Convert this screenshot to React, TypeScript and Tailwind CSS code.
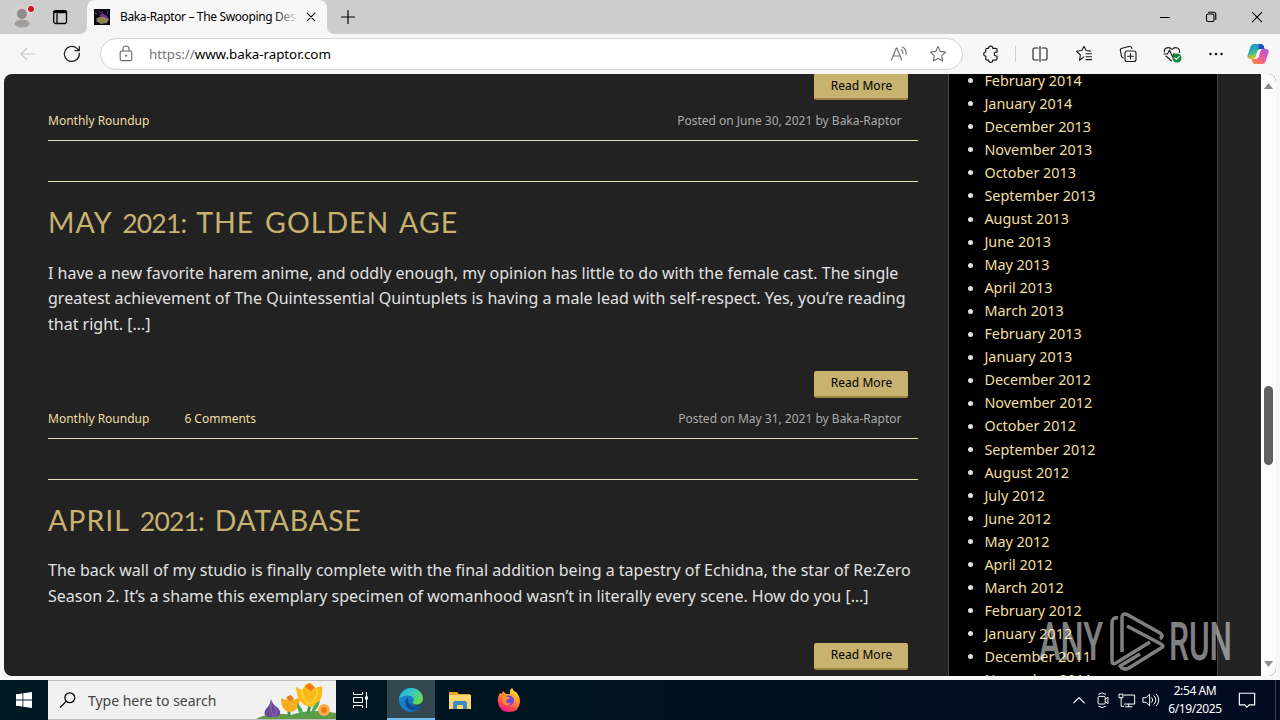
import type { ReactNode } from "react";

const archives = [
  "February 2014",
  "January 2014",
  "December 2013",
  "November 2013",
  "October 2013",
  "September 2013",
  "August 2013",
  "June 2013",
  "May 2013",
  "April 2013",
  "March 2013",
  "February 2013",
  "January 2013",
  "December 2012",
  "November 2012",
  "October 2012",
  "September 2012",
  "August 2012",
  "July 2012",
  "June 2012",
  "May 2012",
  "April 2012",
  "March 2012",
  "February 2012",
  "January 2012",
  "December 2011",
  "November 2011",
];

function Icon({ size = 20, className = "", children }: { size?: number; className?: string; children: ReactNode }) {
  return (
    <svg
      width={size}
      height={size}
      viewBox="0 0 20 20"
      fill="none"
      stroke="currentColor"
      strokeWidth="1.1"
      strokeLinecap="round"
      strokeLinejoin="round"
      className={`shrink-0 ${className}`}
    >
      {children}
    </svg>
  );
}

function TabStrip() {
  return (
    <div className="flex h-[34px] items-center bg-[#cdcdcd] text-black">
      <svg width="28" height="28" viewBox="0 0 28 28" className="ml-2 shrink-0">
        <circle cx="14" cy="14" r="11" fill="#d3cfcd" />
        <circle cx="14" cy="11" r="5" fill="#8f8c8a" />
        <ellipse cx="14" cy="20.500" rx="7.500" ry="4" fill="#a19e9c" />
        <circle cx="23" cy="6" r="4" fill="#e9dcdc" />
        <circle cx="23" cy="6" r="3" fill="#d3132b" />
      </svg>
      <Icon className="ml-[14px]">
        <rect x="3.700" y="3.700" width="12.800" height="12.800" rx="2" strokeWidth="1.300" />
        <path d="M7 7v9.500" strokeWidth="1.300" />
        <path d="M4.200 5h11.800" strokeWidth="2.600" />
      </Icon>
      <div className="relative ml-[17px] flex h-full w-[240px] items-center rounded-t-lg bg-[#f7f7f7]">
        <svg width="256" height="8" viewBox="0 0 256 8" className="absolute -left-2 bottom-0">
          <path d="M0 8q8 0 8-8v8zM256 8q-8 0-8-8v8z" fill="#f7f7f7" />
        </svg>
        <svg width="16" height="16" viewBox="0 0 16 16" className="ml-[7px] shrink-0">
          <path fill="#0b0710" d="M0 0h16v16H0z" />
          <path d="M2 12l3-4 4-1 6 3-2 4-6 1z" fill="#8c8553" />
          <path d="M5 7l3-3 5 3 2 3-5-2z" fill="#6d2fa1" />
          <path d="M4 2l3 2 2-2M13 5l1-3" stroke="#5d25a0" fill="none" />
          <path d="M1 4l2 1M2 10l2-1" stroke="#74845b" fill="none" />
        </svg>
        <div className="relative ml-[10px] w-[178px] overflow-hidden text-[12px] tracking-[-0.360px] whitespace-nowrap">
          Baka-Raptor – The Swooping Des
          <div className="absolute inset-y-0 right-0 w-6 bg-gradient-to-r from-transparent to-[#f7f7f7]" />
        </div>
        <Icon size={14} className="ml-[6px]">
          <path d="M4.500 4.500l11 11M15.500 4.500l-11 11" strokeWidth="1.600" />
        </Icon>
      </div>
      <Icon className="ml-[11px]">
        <path d="M10 3.500v13M3.500 10h13" strokeWidth="1.200" />
      </Icon>
      <div className="ml-auto flex items-center gap-[26px] pr-[13px]">
        <Icon>
          <path d="M5.500 10.500h9" />
        </Icon>
        <Icon>
          <rect x="5.500" y="7" width="7.500" height="7.500" rx="1.500" />
          <path d="M7.500 5.200h5.300q2 0 2 2v5.200" />
        </Icon>
        <Icon>
          <path d="M5.300 5.300l9.500 9.500M14.800 5.300l-9.500 9.500" />
        </Icon>
      </div>
    </div>
  );
}

function Toolbar() {
  return (
    <div className="flex h-10 items-center bg-[#f7f7f7] text-[#1b1b1b]">
      <Icon className="ml-[18px] text-[#c8c8c8]">
        <path d="M17 10H3M8.500 4.500L3 10l5.500 5.500" />
      </Icon>
      <Icon className="ml-6">
        <path d="M17.300 9.200a7.500 7.500 0 1 1-2.200-4.600l2 1.900M17.300 2.400v4.300H13" strokeWidth="1.200" />
      </Icon>
      <div className="ml-[18px] flex h-8 w-[863px] items-center rounded-full border border-[#d3d3d3] bg-white">
        <Icon className="ml-[15px] text-[#666]">
          <rect x="4.200" y="7" width="11.600" height="9.600" rx="1.500" />
          <path d="M7 7V5a3 3 0 0 1 6 0v2" />
          <circle cx="10" cy="11.800" r=".5" fill="currentColor" />
        </Icon>
        <div className="ml-[13px] text-[13.400px] tracking-[-0.060px] text-black">
          <span className="text-[#767676]">https://</span>www.baka-raptor.com
        </div>
        <Icon className="ml-auto text-[#707070]">
          <path d="M2.500 16L7.300 4h.6l4.800 12M4.300 12h6.600M12.200 5.500q1.800 1.500 1.800 4M13.500 3q4.300 2.500 3.500 7.500" />
        </Icon>
        <Icon className="mr-[14px] ml-[19px] text-[#707070]">
          <path d="M10 2.500l2.300 4.900 5.300.7-3.900 3.700 1 5.300-4.700-2.600-4.700 2.600 1-5.300-3.900-3.700 5.300-.7z" />
        </Icon>
      </div>
      <Icon className="ml-[18px]">
        <path
          d="M7.600 4.300a2.100 2.100 0 0 1 4.200 0h3q1.200 0 1.200 1.200v2.700h-.8a1.900 1.900 0 0 0 0 3.800h.8v3q0 1.200-1.200 1.200h-3a2.100 2.100 0 0 1-4.200 0H6q-1.200 0-1.200-1.200v-2.800a2.100 2.100 0 0 1 0-4.200V5.500q0-1.200 1.200-1.200z"
          strokeWidth="1.200"
        />
      </Icon>
      <div className="ml-[14px] h-4 w-px bg-[#d0d0d0]" />
      <Icon className="ml-[14px]">
        <path d="M8 4H4.500q-1.500 0-1.500 1.500v9Q3 16 4.500 16H8M12 4h3.500q1.500 0 1.500 1.500v9q0 1.500-1.500 1.500H12M10 2.500v15" />
      </Icon>
      <Icon className="ml-6">
        <path d="M9.700 13l-4.200 3.300.9-5.300L2.500 7.300l5.300-.8L10 2.200l2.100 4.300 4.200.6M12 9.800h5.500M12 12.700h5.500M12 15.600h5.500" />
      </Icon>
      <Icon className="ml-6">
        <path d="M5.500 14q-1.500-.3-2-1.700L2.400 6.800Q2 4.800 4 4.300L11 2.500q2-.3 2.600 1.300l.3 1" />
        <rect x="7" y="7" width="11" height="10.500" rx="2" />
        <path d="M12.500 9.500v5.500M9.700 12.200h5.600" />
      </Icon>
      <Icon className="ml-6">
        <path d="M2.500 8C1.600 3.800 7 2 10 5.500c3-3.500 8.500-1.500 7.400 3M2 10h3.500L7.500 6l3 7 1.500-3.500M4 12l5.500 5" />
        <circle cx="15" cy="14" r="4.500" fill="#13823b" stroke="none" />
        <path d="M12.900 14l1.500 1.500 2.700-3" stroke="white" />
      </Icon>
      <Icon className="ml-6">
        <g fill="currentColor" stroke="none">
          <circle cx="4.500" cy="10" r="1.300" />
          <circle cx="10" cy="10" r="1.300" />
          <circle cx="15.500" cy="10" r="1.300" />
        </g>
      </Icon>
      <svg width="24" height="24" viewBox="0 0 24 24" className="ml-5 shrink-0">
        <defs>
          <linearGradient id="cpA" x1="0" y1="0" x2=".3" y2="1">
            <stop stopColor="#1593df" />
            <stop offset=".6" stopColor="#37b7a0" />
            <stop offset="1" stopColor="#f5c51c" />
          </linearGradient>
          <linearGradient id="cpB" x1="1" y1="0" x2="0" y2="1">
            <stop stopColor="#a557e8" />
            <stop offset=".5" stopColor="#ee5a94" />
            <stop offset="1" stopColor="#fb923c" />
          </linearGradient>
        </defs>
        <path d="M8 2h7q2 0 2.700 2L18.500 7H14q-2 0-2.600 2l-1.800 6Q9 17 7 17H4q-3 0-2.500-3.500L4.500 4.500Q5.500 2 8 2z" fill="url(#cpA)" />
        <path d="M13 2h2q2 0 2.700 2L18.500 7H14q-1.500 0-2 1z" fill="#1a4fc5" />
        <path d="M16 22H9q-2 0-2.700-2L5.500 17H10q2 0 2.600-2l1.800-6q.6-2 2.600-2h3q3 0 2.500 3.500l-3 9Q18.500 22 16 22z" fill="url(#cpB)" />
      </svg>
    </div>
  );
}

function ReadMore() {
  return (
    <div className="mr-[10px] ml-auto flex h-[27px] w-[94px] shrink-0 items-center justify-center rounded-[2px] border-b-2 border-[#9b8445] bg-[#c7b26f] pl-px text-[12px] tracking-[0.050px] text-black">
      Read More
    </div>
  );
}

function PostMeta({ date, comments }: { date: string; comments?: string }) {
  return (
    <div className="mt-[11px] flex h-[30px] items-start border-b border-[#e5dfb9] text-[12px] leading-5 text-[#f1dfa2]">
      <span>Monthly Roundup</span>
      {comments && <span className="ml-[35px]">{comments}</span>}
      <span className="mr-[16.500px] ml-auto text-[#aaa]">Posted on {date} by Baka-Raptor</span>
    </div>
  );
}

function Post({ title, children, footer }: { title: ReactNode; children: ReactNode; footer?: ReactNode }) {
  return (
    <article className="mt-10 flex flex-col border-t border-[#e5dfb9]">
      <h2 className="mt-[22px] h-[37px] font-['Lato'] text-[28.500px] leading-[37px] tracking-[1px] [word-spacing:2.500px] whitespace-nowrap text-[#c7b26f]">
        {title}
      </h2>
      <div className="mt-[19.600px] text-[16px] leading-[25.600px] whitespace-nowrap text-[#e1e1e1]">{children}</div>
      <div className="mt-[33.400px] flex">
        <ReadMore />
      </div>
      {footer}
    </article>
  );
}

function Year({ children }: { children: ReactNode }) {
  return <span className="text-[26.500px] tracking-[-0.800px]">{children}</span>;
}

function Watermark() {
  return (
    <svg width="200" height="68" viewBox="0 0 200 68" className="absolute top-[534px] left-[1032px] opacity-50">
      <g fill="#fff" fontFamily="Roboto" fontWeight="500" fontSize="53">
        <text x="3" y="52" textLength="64" lengthAdjust="spacingAndGlyphs">ANY</text>
        <text x="133" y="52" textLength="63" lengthAdjust="spacingAndGlyphs">RUN</text>
      </g>
      <g fill="none" stroke="#fff" strokeWidth="3.500" strokeLinejoin="round">
        <path d="M82 10q-6-1-6 5v38q0 4 4 2l34-21" />
        <path d="M86 44V10q0-6 6-3l32 18q4 3 0 6" />
        <path d="M91 18l34 18q4 2 0 4L93 60q-5 3-9-2l20-12" />
      </g>
    </svg>
  );
}

function Page() {
  return (
    <div className="relative mx-1 flex h-[602px] overflow-hidden rounded-lg bg-[#222]">
      <main className="ml-[44px] w-[870px] shrink-0">
        <div className="-mt-px flex">
          <ReadMore />
        </div>
        <PostMeta date="June 30, 2021" />
        <Post
          title={<>MAY <Year>2021:</Year> THE GOLDEN AGE</>}
          footer={<PostMeta date="May 31, 2021" comments="6 Comments" />}
        >
          <p>I have a new favorite harem anime, and oddly enough, my opinion has little to do with the female cast. The single</p>
          <p>greatest achievement of The Quintessential Quintuplets is having a male lead with self-respect. Yes, you’re reading</p>
          <p>that right. […]</p>
        </Post>
        <Post title={<>APRIL <Year>2021:</Year> <span className="tracking-[0.600px]">DATABASE</span></>}>
          <p>The back wall of my studio is finally complete with the final addition being a tapestry of Echidna, the star of Re:Zero</p>
          <p>Season 2. It’s a shame this exemplary specimen of womanhood wasn’t in literally every scene. How do you […]</p>
        </Post>
      </main>
      <aside className="ml-[30px] w-[270px] shrink-0 border-x border-[#444] bg-black">
        <ul className="-mt-[4.700px]">
          {archives.map((month) => (
            <li key={month} className="flex h-[23.040px] items-center pl-[19.400px] text-[14.400px] text-[#f1dfa2]">
              <span className="mr-[11px] size-[5px] rounded-full bg-[#e1e1e1]" />
              {month}
            </li>
          ))}
        </ul>
      </aside>
      <div className="ml-auto flex w-[15px] flex-col items-center bg-[#fcfcfc] pt-[9px] pb-[9px]">
        <svg width="9" height="6" viewBox="0 0 9 6">
          <path d="M0 6l4.500-6L9 6z" fill="#8b8b8b" />
        </svg>
        <div className="mt-[297px] h-[79px] w-[9px] rounded-full bg-[#606060]" />
        <svg width="9" height="6" viewBox="0 0 9 6" className="mt-auto">
          <path d="M0 0l4.500 6L9 0z" fill="#8b8b8b" />
        </svg>
      </div>
      <Watermark />
    </div>
  );
}

function Flowers() {
  return (
    <svg width="80" height="38" viewBox="0 0 80 38" className="ml-auto shrink-0">
      <path d="M0 38q14-8 35-4Q55 27 80 32v6z" fill="#5d9c45" />
      <path d="M33 35V25M52 32q2-9 4-11" stroke="#3b9a49" strokeWidth="3" fill="none" />
      <path d="M15 18q1 5 7 9 5 6-1 9H12q-6-3-2-8 4-4 5-10z" fill="#6d4a9c" />
      <path d="M15 21q-1 8 2 15M19 26q3 5 0 10" stroke="#8b67b4" fill="none" />
      <path d="M25 17l5 2 4-5 4 5 6-3q0 14-10 15-9-1-9-14z" fill="#f6ae1c" />
      <path d="M40 6l6 3 4-6 5-1 4 5 7-2q2 18-11 21Q41 24 40 6z" fill="#fbb91b" />
      <path d="M46 9q0 10 8 15M61 8q2 8-7 16" stroke="#ffd02f" strokeWidth="2" fill="none" />
      <path d="M49 6l4-4 6 4-4 4zM30 16l5-2 3 4-4 2z" fill="#ed7d16" />
      <circle cx="68" cy="29" r="6" fill="#f8b04d" />
      <circle cx="68" cy="29" r="3" fill="#e97919" />
      <path d="M48 37q-1-11-7-15 0 10 7 15zM55 32q2-9 9-12-2 9-9 12z" fill="#45ad50" />
    </svg>
  );
}

function Taskbar() {
  return (
    <div className="mt-1 flex h-10 items-center bg-gradient-to-r from-[#001a24] via-[#00131f] to-[#020a20] text-white">
      <div className="flex w-12 shrink-0 justify-center">
        <svg width="16" height="16" viewBox="0 0 16 16" fill="white">
          <path d="M0 2.300l6.500-.9v6.200H0zM7.300 1.300L16 0v7.600H7.300zM0 8.400h6.500v6.200L0 13.700zM7.300 8.400H16V16l-8.700-1.300z" />
        </svg>
      </div>
      <div className="flex h-10 w-[288px] items-center border-t border-b border-[#bcbcbc] bg-[#f1f1f1] pl-[11px]">
        <Icon size={18} className="text-black">
          <circle cx="12" cy="7.500" r="5.500" strokeWidth="1.400" />
          <path d="M8 11.500L1.500 18" strokeWidth="1.400" />
        </Icon>
        <span className="ml-[11px] text-[14px] tracking-[-0.030px] whitespace-nowrap text-[#444]">Type here to search</span>
        <Flowers />
      </div>
      <div className="flex w-[51px] shrink-0 justify-center pr-[3px]">
        <svg width="17" height="16" viewBox="0 0 17 16" fill="none" stroke="white">
          <path d="M1.500 0v2.500h9V0M1.500 16v-2.500h9V16M1.500 5.500h9v5h-9zM14.500 0v16" />
          <path d="M13 4.500h3v3h-3z" fill="white" stroke="none" />
        </svg>
      </div>
      <div className="flex h-10 w-12 items-center justify-center border-b-2 border-[#76b9ed] bg-[#32474f]">
        <svg width="24" height="24" viewBox="0 0 24 24" className="mt-0.5">
          <defs>
            <linearGradient id="edA" x1="0" y1="0" x2="1" y2=".5">
              <stop stopColor="#24a9e1" />
              <stop offset=".5" stopColor="#32c5c7" />
              <stop offset="1" stopColor="#65db55" />
            </linearGradient>
            <linearGradient id="edB" x1="0" y1="0" x2="1" y2="1">
              <stop stopColor="#1c8fd8" />
              <stop offset="1" stopColor="#1464b5" />
            </linearGradient>
          </defs>
          <path d="M12 24A12 12 0 1 1 17 1.100L14 14q-1 3 4 4.500l4.500-1Q19 24 12 24z" fill="url(#edB)" />
          <path d="M0 11C1 4 6 0 12 0c7 0 12 5 12 10.500 0 4-3 6-6.500 6-3 0-4.500-1.500-3.500-3 2-3-1-6-5-6-4 0-7.500 1.500-9 3.500z" fill="url(#edA)" />
          <path d="M9 9q-5 5-.5 10.500Q13 24 20 20q2-1 2.500-2.500-6 2.500-10.500-.5-4-3-3-8z" fill="#0c4b8f" />
        </svg>
      </div>
      <div className="flex w-[49px] shrink-0 justify-center">
        <svg width="22" height="19" viewBox="0 0 22 19">
          <path d="M0 1h8l2 2h11v15H0z" fill="#e7a52b" />
          <path d="M0 4h22v14H0z" fill="#fbd770" />
          <path d="M4 18v-6q0-2 2-2h10q2 0 2 2v6h-4v-4H8v4z" fill="#3b8cc6" />
        </svg>
      </div>
      <div className="flex w-[49px] shrink-0 justify-center">
        <svg width="24" height="24" viewBox="0 0 24 24">
          <defs>
            <linearGradient id="ffA" x1=".8" y1="0" x2=".3" y2="1">
              <stop stopColor="#fff044" />
              <stop offset=".4" stopColor="#ff9a2a" />
              <stop offset=".75" stopColor="#ff4554" />
              <stop offset="1" stopColor="#e31587" />
            </linearGradient>
          </defs>
          <path d="M3 5l2 1 1-3 3 3 4 0q-1-4 2-6 1 3 4 4 4 4 4 10-1 10-11 10T1 14Q0 9 3 5z" fill="url(#ffA)" />
          <circle cx="12" cy="12.500" r="5" fill="#7543e0" />
          <path d="M5 9q4-2 8 1-2 2-4 2 0 4 5 3-3 4-7 1-3-3-2-7z" fill="#ff8b2d" />
        </svg>
      </div>
      <div className="ml-auto flex items-center">
        <Icon size={16}>
          <path d="M3.500 13.500L10 7l6.500 6.500" strokeWidth="1.500" />
        </Icon>
        <Icon size={18} className="ml-[7px]">
          <rect x="4.500" y="6" width="8" height="8.500" rx="1.500" />
          <path d="M12.500 9l3-2v7l-3-2M5 3.500q4-3 8 0M5 17q4 3 8 0" />
        </Icon>
        <Icon size={18} className="ml-[6px]">
          <path d="M6.500 4.500h12v10H7M12 14.500v3M8.500 17.500h7M1.500 3.500h4v4h-4zM3.500 7.500V17h3" />
        </Icon>
        <Icon size={18} className="ml-[6px]">
          <path d="M1.500 7.500h3l4-4v13l-4-4h-3zM11 7.500q2 2.500 0 5M13.500 5.500q4 4.500 0 9M16 3.500q5.500 6.500 0 13" />
        </Icon>
        <div className="ml-[2px] w-[66px] text-center text-[12px] leading-[18px] tracking-[-0.400px] whitespace-nowrap">
          <div>2:54 AM</div>
          <div>6/19/2025</div>
        </div>
        <Icon size={18} className="mr-[19px] ml-[10px]">
          <path d="M1.500 2.500h17v13h-6L10 18l-2.500-2.500h-6z" strokeWidth="1.300" strokeLinejoin="miter" />
        </Icon>
        <div className="h-10 w-px bg-[#3a4250]" />
        <div className="w-[4px]" />
      </div>
    </div>
  );
}

export default function App() {
  return (
    <div className="h-[720px] w-[1280px] overflow-hidden bg-[#f7f7f7] font-['Noto_Sans',sans-serif]">
      <TabStrip />
      <Toolbar />
      <Page />
      <Taskbar />
    </div>
  );
}
